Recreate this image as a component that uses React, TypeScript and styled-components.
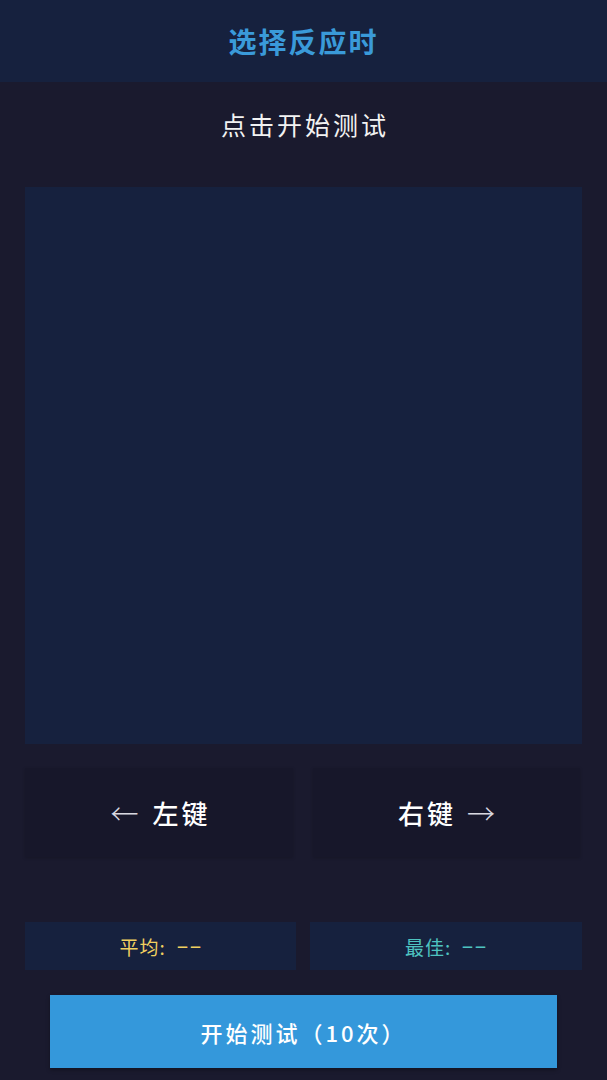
import React from "react";
import styled, { createGlobalStyle } from "styled-components";

const GlobalStyle = createGlobalStyle`
  * { box-sizing: border-box; }
  html, body {
    margin: 0;
    padding: 0;
    background: #1a1a2e;
    font-family: "Noto Sans CJK SC", "Noto Sans", sans-serif;
  }
`;

const Page = styled.div`
  width: 607px;
  height: 1080px;
  background: #1a1a2e;
  display: flex;
  flex-direction: column;
`;

const Header = styled.header`
  height: 82px;
  background: #16213e;
  display: flex;
  align-items: center;
  justify-content: center;
`;

const Title = styled.h1`
  margin: 0;
  color: #3a9ad9;
  font-size: 28px;
  font-weight: 700;
  letter-spacing: 2px;
`;

const Body = styled.main`
  padding: 0 25px;
  display: flex;
  flex-direction: column;
`;

const Status = styled.div`
  height: 84px;
  display: flex;
  align-items: center;
  justify-content: center;
  color: #f2f2f2;
  font-size: 25px;
  letter-spacing: 3px;
  padding-left: 3px;
`;

const Stage = styled.div`
  margin-top: 21px;
  width: 557px;
  height: 557px;
  background: #16213e;
`;

const KeyRow = styled.div`
  margin-top: 24px;
  display: grid;
  grid-template-columns: 268px 267px;
  gap: 20px;
`;

const KeyButton = styled.button`
  height: 89px;
  border: none;
  background: #17172a;
  box-shadow: 0 1px 3px rgba(0, 0, 0, 0.18);
  color: #ffffff;
  font-family: inherit;
  font-size: 26px;
  font-weight: 500;
  display: flex;
  align-items: center;
  justify-content: center;
  gap: 14px;
  cursor: pointer;
`;

const KeyLabel = styled.span`
  letter-spacing: 3px;
  margin-right: -3px;
`;

const Arrow = styled.span`
  font-family: "Noto Sans CJK SC", sans-serif;
  font-size: 28px;
  font-weight: 300;
  color: #d8d8e0;
`;

const StatsRow = styled.div`
  margin-top: 65px;
  display: grid;
  grid-template-columns: 271px 272px;
  gap: 14px;
`;

const StatBox = styled.div<{ tone: string }>`
  height: 48px;
  background: #16213e;
  color: ${(p) => p.tone};
  font-size: 19px;
  display: flex;
  align-items: center;
  justify-content: center;
`;

const StatLabel = styled.span`
  letter-spacing: 1px;
  margin-right: 10px;
`;

const StatValue = styled.span`
  display: inline-block;
  font-family: "DejaVu Sans", sans-serif;
  font-size: 19px;
  transform: scaleX(1.9);
  transform-origin: left center;
  margin-right: 12px;
`;

const StartButton = styled.button`
  margin: 25px 25px 0;
  height: 73px;
  border: none;
  background: #3498db;
  color: #ffffff;
  font-family: inherit;
  font-size: 22px;
  font-weight: 500;
  letter-spacing: 3px;
  cursor: pointer;
  box-shadow: 0 2px 4px rgba(0, 0, 0, 0.3);
`;

export default function App() {
  return (
    <>
      <GlobalStyle />
      <Page>
        <Header>
          <Title>选择反应时</Title>
        </Header>
        <Body>
          <Status>点击开始测试</Status>
          <Stage />
          <KeyRow>
            <KeyButton>
              <Arrow>←</Arrow>
              <KeyLabel>左键</KeyLabel>
            </KeyButton>
            <KeyButton>
              <KeyLabel>右键</KeyLabel>
              <Arrow>→</Arrow>
            </KeyButton>
          </KeyRow>
          <StatsRow>
            <StatBox tone="#f0d060">
              <StatLabel>平均:</StatLabel>
              <StatValue>--</StatValue>
            </StatBox>
            <StatBox tone="#4ec3c0">
              <StatLabel>最佳:</StatLabel>
              <StatValue>--</StatValue>
            </StatBox>
          </StatsRow>
          <StartButton>开始测试（10次）</StartButton>
        </Body>
      </Page>
    </>
  );
}
